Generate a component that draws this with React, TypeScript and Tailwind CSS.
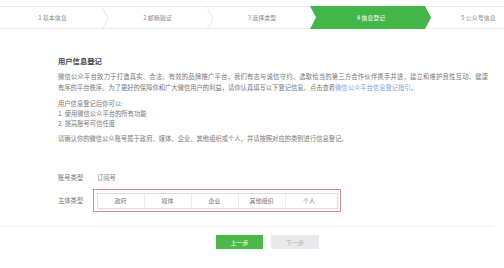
import React from "react";

const Chevron = () => (
  <svg width="8" height="23" viewBox="0 0 8 23" className="shrink-0">
    <polyline points="1,0 7,11.5 1,23" fill="none" stroke="#e6e6e6" strokeWidth="1" />
  </svg>
);

export default function App() {
  const font = { fontFamily: '"Noto Sans CJK SC", "Noto Sans", sans-serif' };
  return (
    <div className="w-[504px] h-[268px] bg-white overflow-hidden relative" style={font}>
      {/* steps */}
      <div className="mt-[6px] h-[23px] flex border-y border-[#ececec] text-[6px] text-[#8a8a8a] whitespace-nowrap">
        <div className="w-[101px] flex items-center justify-center pl-[4px]">1 基本信息</div>
        <Chevron />
        <div className="w-[97px] flex items-center justify-center">2 邮箱验证</div>
        <Chevron />
        <div className="w-[96px] flex items-center justify-center">3 选择类型</div>
        <div className="w-[121px] flex items-center justify-center bg-[#44b549] text-white [clip-path:polygon(0_0,115px_0,121px_50%,115px_100%,0_100%,6px_50%)] -mt-px h-[23px] pl-[1px]">4 信息登记</div>
        <div className="flex-1 flex items-center pl-[30px]">5 公众号信息</div>
      </div>

      {/* content */}
      <div className="pl-[58px] pt-[27px] text-[6.3px] text-[#777]">
        <div className="text-[7.3px] leading-[10px] font-bold text-[#444]">用户信息登记</div>
        <div className="mt-[4.5px] leading-[11px]">
          <div className="w-[430px] text-justify [text-align-last:justify]">微信公众平台致力于打造真实、合法、有效的品牌推广平台，我们有志与诚信守约、选取恰当的第三方合作伙伴携手并进，建立和维护良性互动、健康</div>
          <div className="whitespace-nowrap">
            有序的平台秩序。为了更好的保障你和广大微信用户的利益，请你认真填写以下登记信息。点击查看<span className="text-[#7aa6da]">微信公众平台信息登记指引</span>。
          </div>
        </div>
        <div className="mt-[6.5px] leading-[10px]">
          <div>用户信息登记后你可以:</div>
          <div>1. 使用微信公众平台的所有功能</div>
          <div>2. 提高账号可信任度</div>
        </div>
        <div className="mt-[5px] leading-[10px]">请确认你的微信公众账号属于政府、媒体、企业、其他组织或个人，并请按照对应的类别进行信息登记。</div>

        <div className="mt-[29px] flex items-center leading-[10px]">
          <div className="w-[39px]">账号类型</div>
          <div>订阅号</div>
        </div>
        <div className="mt-[6px] flex items-center">
          <div className="w-[35px]">主体类型</div>
          <div className="border border-[#d98c8c] p-[2.5px] w-[248px] h-[23px]">
            <div className="flex h-full border border-[#dcdcdc] text-[6px] text-[#777]">
              {["政府", "媒体", "企业", "其他组织", "个人"].map((t, i) => (
                <div
                  key={t}
                  className={`w-[47px] flex items-center justify-center ${i < 4 ? "border-r border-[#ececec]" : ""}`}
                >
                  {t}
                </div>
              ))}
            </div>
          </div>
        </div>
      </div>

      <div className="mt-[14px] border-t border-[#efefef] w-[494px]"></div>

      <div className="mt-[8px] flex pl-[216px] gap-[8px] text-[6px]">
        <div className="w-[47px] h-[14px] bg-[#4cb848] text-white flex items-center justify-center">上一步</div>
        <div className="w-[48px] h-[14px] bg-[#e9e9ec] text-[#b0b0b0] flex items-center justify-center">下一步</div>
      </div>
    </div>
  );
}
